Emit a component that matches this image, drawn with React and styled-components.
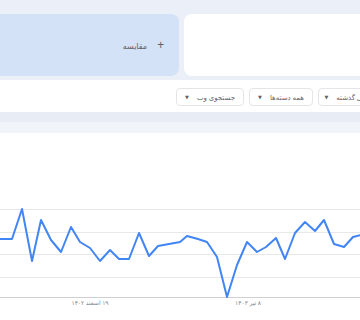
import React from "react";
import styled, { createGlobalStyle } from "styled-components";

const GlobalStyle = createGlobalStyle`
  html, body {
    margin: 0;
    padding: 0;
    background: #ffffff;
    overflow: hidden;
  }
  body {
    font-family: "Noto Sans", "DejaVu Sans", sans-serif;
    width: 360px;
    height: 320px;
  }
`;

const Page = styled.div`
  width: 360px;
  height: 320px;
  overflow: hidden;
  display: flex;
  flex-direction: column;
  & > * {
    flex-shrink: 0;
  }
`;

const Header = styled.div`
  background: #ebeff7;
  padding: 14px 0 4px;
  overflow: hidden;
`;

const Cards = styled.div`
  display: flex;
  gap: 5px;
  margin-left: -20px;
  width: 400px;
`;

const Card = styled.div`
  height: 62px;
  border-radius: 8px;
  background: ${({ $tone }) => ($tone === "blue" ? "#d3e2f6" : "#ffffff")};
  width: ${({ $w }) => ($w ? `${$w}px` : "auto")};
  flex: ${({ $w }) => ($w ? "none" : "1")};
  display: flex;
  align-items: center;
  justify-content: flex-end;
  padding-right: 15px;
  box-sizing: border-box;
`;

const Compare = styled.div`
  display: flex;
  align-items: center;
  gap: 10px;
  color: #5f6368;
  font-size: 8px;
  direction: rtl;
`;

const Plus = styled.span`
  font-size: 12px;
  line-height: 1;
  color: #5f6368;
`;

const FilterBar = styled.div`
  background: #ffffff;
  height: 32px;
  padding: 8px 0 0 176px;
  box-sizing: border-box;
  display: flex;
  gap: 5px;
  overflow: hidden;
`;

const Chip = styled.div`
  flex: none;
  width: ${({ $w }) => $w}px;
  height: 18px;
  box-sizing: border-box;
  border: 1px solid #e3e5e8;
  border-radius: 4px;
  background: #fff;
  display: flex;
  align-items: center;
  justify-content: center;
  gap: 8px;
  font-size: 7px;
  color: #5f6368;
  white-space: nowrap;
`;

const Caret = styled.span`
  font-size: 5px;
  color: #5f6368;
`;

const Divider = styled.div`
  height: 10px;
  background: #e8ecf4;
`;

const Shade = styled.div`
  height: 11px;
  background: #f1f4f9;
`;

const ChartBox = styled.div`
  height: 187px;
  background: #ffffff;
  & svg {
    display: block;
  }
`;

const points = [
  [0, 239], [12, 239], [22, 209], [32, 261], [41, 220], [51, 240], [61, 252],
  [71, 227], [80, 242], [90, 248], [100, 261], [110, 250], [119, 259],
  [129, 259], [139, 233], [149, 256], [158, 246], [180, 242], [187, 236],
  [198, 239], [207, 242], [217, 257], [227, 297], [237, 265], [247, 242],
  [257, 252], [266, 247], [276, 238], [285, 259], [295, 233], [305, 222],
  [315, 231], [324, 220], [334, 244], [344, 247], [353, 237], [361, 235],
];

const TOP = 133;

const Chart = () => {
  const d = points.map(([x, y], i) => `${i ? "L" : "M"}${x} ${y - TOP}`).join(" ");
  const grid = [209, 232, 254, 277];
  return (
    <svg width="360" height="187" viewBox="0 0 360 187">
      {grid.map((g) => (
        <line key={g} x1="0" x2="360" y1={g - TOP + 0.5} y2={g - TOP + 0.5} stroke="#e8e8e8" strokeWidth="1" />
      ))}
      <line x1="0" x2="360" y1={297 - TOP + 0.5} y2={297 - TOP + 0.5} stroke="#d0d0d0" strokeWidth="1" />
      <path d={d} fill="none" stroke="#4285f4" strokeWidth="2" strokeLinejoin="round" />
      <text x="90" y={305 - TOP} fontSize="6" fill="#80868b" textAnchor="middle" direction="rtl" fontFamily="Noto Sans, DejaVu Sans, sans-serif">
        ۱۹ اسفند ۱۴۰۲
      </text>
      <text x="248" y={305 - TOP} fontSize="6" fill="#80868b" textAnchor="middle" direction="rtl" fontFamily="Noto Sans, DejaVu Sans, sans-serif">
        ۸ تیر ۱۴۰۳
      </text>
    </svg>
  );
};

export default function App() {
  return (
    <Page>
      <GlobalStyle />
      <Header>
        <Cards>
          <Card $tone="blue" $w={199}>
            <Compare>
              <Plus>+</Plus>
              <span>مقایسه</span>
            </Compare>
          </Card>
          <Card />
        </Cards>
      </Header>
      <FilterBar>
        <Chip $w={68}>
          <Caret>▼</Caret>
          <span dir="rtl">جستجوی وب</span>
        </Chip>
        <Chip $w={64}>
          <Caret>▼</Caret>
          <span dir="rtl">همه دسته‌ها</span>
        </Chip>
        <Chip $w={64}>
          <Caret>▼</Caret>
          <span dir="rtl">۵ سال گذشته</span>
        </Chip>
      </FilterBar>
      <Divider />
      <Shade />
      <ChartBox>
        <Chart />
      </ChartBox>
    </Page>
  );
}
